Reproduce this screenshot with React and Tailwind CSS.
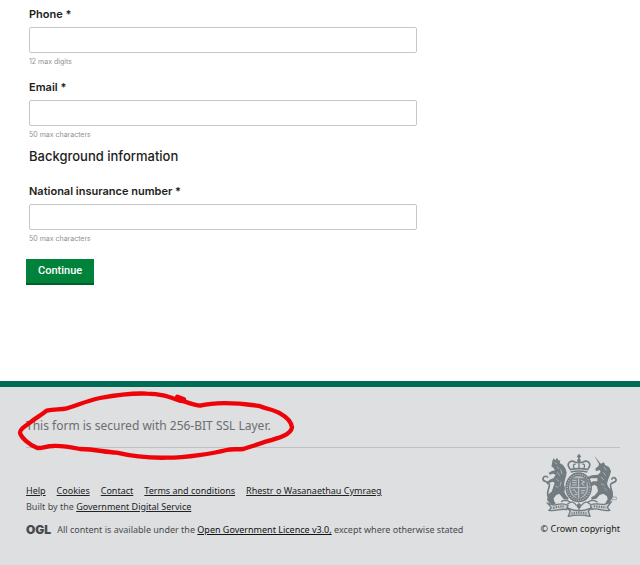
const fields = [
  { id: "phone", label: "Phone *", hint: "12 max digits", type: "tel", max: 12 },
  { id: "email", label: "Email *", hint: "50 max characters", type: "email", max: 50 },
];

function Field({ id, label, hint, type, max }) {
  return (
    <div>
      <label htmlFor={id} className="mb-[3px] block text-[11px] leading-5 font-semibold text-[#1c1e20]">
        {label}
      </label>
      <input
        id={id}
        type={type}
        maxLength={max}
        aria-describedby={id + "-hint"}
        className="block h-[26px] w-full rounded-[2px] border border-[#c4c6c8] bg-white px-2 text-[11px]"
      />
      <p id={id + "-hint"} className="mt-[3px] text-[7px] leading-3 text-[#8f9193]">
        {hint}
      </p>
    </div>
  );
}

function RedMarker() {
  return (
    <svg
      className="pointer-events-none absolute -top-[26px] -left-[11px] h-[72px] w-[284px]"
      viewBox="45 60 852 216"
      fill="none"
      stroke="#ee0308"
      strokeLinecap="round"
      strokeLinejoin="round"
      aria-hidden="true"
    >
      <path
        strokeWidth="13"
        d="M532 80 L552 88 L540 92 C560 95 580 105 600 107 C640 97 710 98 778 108 C800 117 825 120 840 130 C860 141 874 155 876 172 C872 195 835 205 800 214 C775 224 755 228 730 237 C710 239 695 236 680 240 C640 250 560 263 500 263 C450 264 400 260 350 248 C310 246 290 238 240 237 C205 230 180 226 158 228 C140 229 125 235 112 234 C90 226 62 202 60 188 C60 175 78 168 90 158 C105 145 122 137 140 122 C165 116 180 120 200 115 C230 106 265 91 300 84 C350 75 400 69 440 71 C490 71 510 82 540 92"
      />
    </svg>
  );
}

function Lion() {
  return (
    <g>
      <path d="M94 78 L98 70 L103 76 L108 68 L113 77 L118 75 L116 84 L126 90 L133 100 L137 112 L135 124 L132 134 L129 148 L132 160 L130 172 L137 184 L143 188 L141 194 L128 193 L120 182 L114 176 L106 180 L98 190 L100 200 L105 205 L96 210 L84 203 L78 194 L82 178 L92 170 L96 158 L101 144 L96 140 L86 143 L79 149 L76 143 L86 134 L98 129 L104 119 L96 116 L86 119 L83 113 L93 108 L102 106 L97 98 L91 94 L93 87 Z" />
      <path d="M86 190 C70 176 88 158 85 148 C82 136 63 143 66 130 C68 122 78 122 81 128" fill="none" stroke="#727c81" strokeWidth="5" />
      <path d="M101 82 l7 5 M108 94 l6 8 M109 112 l7 10 M106 132 l8 7 M103 153 l9 4 M119 103 l4 14 M120 140 l-3 14" stroke="#c5cacd" strokeWidth="2" fill="none" />
    </g>
  );
}

function Unicorn() {
  return (
    <g>
      <path d="M220 62 L239 86 L249 82 L252 90 L264 96 L270 108 L267 120 L262 132 L258 146 L262 156 L271 166 L277 184 L270 196 L263 206 L253 205 L260 193 L258 184 L247 176 L236 180 L226 191 L211 194 L211 187 L222 181 L231 169 L228 155 L221 149 L208 155 L203 148 L216 139 L229 139 L229 130 L211 130 L201 134 L199 126 L213 121 L231 119 L239 111 L236 105 L225 109 L223 101 L233 92 L234 87 Z" />
      <path d="M265 190 C284 176 264 160 269 148 C274 139 287 145 285 133 C282 125 272 127 272 134" fill="none" stroke="#727c81" strokeWidth="5" />
      <path d="M249 96 l7 10 M247 112 l7 10 M240 126 l9 9 M240 145 l10 7 M250 159 l8 8" stroke="#c5cacd" strokeWidth="2" fill="none" />
    </g>
  );
}

function RoyalArms() {
  return (
    <svg className="h-[63px] w-[78px]" viewBox="60 57 234 189" fill="#727c81" role="img" aria-label="Royal coat of arms">
      <Lion />
      <Unicorn />
      {/* crown */}
      <g fill="none" stroke="#727c81" strokeWidth="5">
        <path d="M174 58 V76 M168 64 H180" />
        <path d="M147 102 C134 85 148 74 162 81 C170 84 173 82 174 78 C175 82 178 84 186 81 C200 74 214 85 201 102" />
        <path d="M160 101 C154 91 159 85 164 88 M188 101 C194 91 189 85 184 88 M174 80 V101" strokeWidth="4" />
        <path d="M146 104 Q174 98 202 104 M149 111 Q174 105 199 111" />
      </g>
      <circle cx="174" cy="76" r="5" />
      {/* garter and shield */}
      <ellipse cx="173" cy="157" rx="40" ry="45" />
      <ellipse cx="173" cy="157" rx="34" ry="39" fill="none" stroke="#bcc2c5" strokeWidth="4" strokeDasharray="3 4" />
      <ellipse cx="173" cy="157" rx="29" ry="34" fill="#b4babd" />
      <path d="M149 130 H197 V163 Q194 183 173 191 Q152 183 149 163 Z" fill="#7c858a" />
      <path d="M173 131 V190 M150 158 H196" stroke="#c5cacd" strokeWidth="3" />
      <path d="M154 136 h13 M154 143 h13 M154 150 h13 M155 166 q6 -5 8 3 t7 4 M181 136 l10 5 l-9 5 l8 6 M180 167 h12 M180 174 h9 M160 179 h9" fill="none" stroke="#c5cacd" strokeWidth="3" />
      {/* motto scroll */}
      <g fill="#c9cdcf" stroke="#727c81" strokeWidth="4">
        <path d="M80 205 L91 218 L84 226 C107 231 119 218 137 224 L141 211 C122 201 110 210 99 210 Z" />
        <path d="M270 201 L259 217 L266 226 C243 230 230 217 213 223 L208 210 C224 202 239 210 250 208 Z" />
        <path d="M137 218 L148 228 L142 244 Q174 237 207 244 L202 228 L213 218 Q174 236 137 218 Z" />
      </g>
      <path d="M96 219 Q115 214 130 214 M218 214 Q238 215 254 218 M151 236 Q174 230 199 236" fill="none" stroke="#727c81" strokeWidth="6" strokeDasharray="4 3" />
      <path d="M139 208 Q155 193 167 212 M208 208 Q193 193 181 212 M174 203 V229 M120 200 Q136 191 149 203 M199 203 Q214 190 230 202" fill="none" stroke="#727c81" strokeWidth="4" />
      <circle cx="174" cy="213" r="7" />
      <path d="M273 186 h13 v8 h-13 z" fill="none" stroke="#8a9296" strokeWidth="2" />
    </svg>
  );
}

const links = ["Help", "Cookies", "Contact", "Terms and conditions", "Rhestr o Wasanaethau Cymraeg"];

export default function App() {
  return (
    <div className="flex min-h-screen flex-col bg-white">
      <main className="px-[29px] pt-1 pb-24 font-['Inter',sans-serif]">
        <form className="max-w-[388px]" onSubmit={(e) => e.preventDefault()}>
          <div className="flex flex-col gap-[9px]">
            {fields.map((f) => (
              <Field key={f.id} {...f} />
            ))}
          </div>
          <h2 className="mt-1 mb-[14px] text-[13px] leading-[22px] font-medium text-[#1c1e20]">
            Background information
          </h2>
          <Field id="nino" label="National insurance number *" hint="50 max characters" type="text" max={50} />
          <button
            type="submit"
            className="mt-[14px] -ml-[3px] block h-[26px] border-b-2 border-[#00602a] bg-[#00823b] px-3 font-['Roboto',sans-serif] text-[11px] leading-6 font-medium text-white"
          >
            Continue
          </button>
        </form>
      </main>

      <footer className="flex-1 border-t-[6px] border-[#006c56] bg-[#dddfe0] pr-5 pb-6 pl-[26px] font-['Noto_Sans',sans-serif] text-[9px] leading-4 text-[#484b4d]">
        <div className="border-b border-[#bfc2c4] pt-[29px] pb-[11px]">
          <div className="relative">
            <p className="text-[12px] leading-5 text-[#6b6e71]">This form is secured with 256-BIT SSL Layer.</p>
            <RedMarker />
          </div>
        </div>
        <div className="flex justify-between">
          <div className="pt-[35px]">
            <ul className="flex gap-[11px]">
              {links.map((l) => (
                <li key={l}>
                  <a href="#" className="text-[#202224] underline">
                    {l}
                  </a>
                </li>
              ))}
            </ul>
            <p>
              Built by the{" "}
              <a href="#" className="text-[#202224] underline">
                Government Digital Service
              </a>
            </p>
            <div className="mt-[7px] flex gap-[6px]">
              <span className="font-['Inter',sans-serif] text-[12px] font-black">OGL</span>
              <p>
                All content is available under the{" "}
                <a href="#" className="text-[#111315] underline">
                  Open Government Licence v3.0,
                </a>{" "}
                except where otherwise stated
              </p>
            </div>
          </div>
          <div className="flex flex-col items-start pt-[6px]">
            <RoyalArms />
            <a href="#" className="mt-1 text-[#1c1e20]">
              © Crown copyright
            </a>
          </div>
        </div>
      </footer>
    </div>
  );
}
